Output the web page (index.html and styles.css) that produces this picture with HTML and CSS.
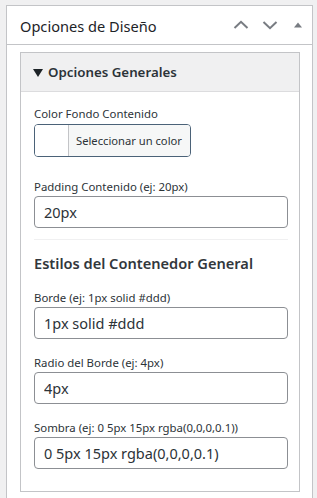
FILE: index.html
```html
<!DOCTYPE html>
<html lang="es">
<head>
<meta charset="utf-8">
<title>Opciones de Diseño</title>
<link rel="stylesheet" href="styles.css">
</head>
<body>
<div class="postbox">
  <div class="postbox-header">
    <h2 class="postbox-title">Opciones de Diseño</h2>
    <div class="handle-actions">
      <button class="handle-btn" aria-label="Mover arriba">
        <svg width="16" height="16" viewBox="0 0 16 16"><path d="M1.5 11 L8 4.8 L14.5 11" fill="none" stroke="#787c82" stroke-width="2"/></svg>
      </button>
      <button class="handle-btn" aria-label="Mover abajo">
        <svg width="16" height="16" viewBox="0 0 16 16"><path d="M1.5 5 L8 11.2 L14.5 5" fill="none" stroke="#787c82" stroke-width="2"/></svg>
      </button>
      <button class="handle-btn toggle" aria-label="Alternar panel">
        <svg width="10" height="8" viewBox="0 0 10 8"><path d="M1 6.5 L5 1.5 L9 6.5 Z" fill="#787c82"/></svg>
      </button>
    </div>
  </div>
  <div class="inside">
    <details class="group" open>
      <summary class="group-summary">Opciones Generales</summary>
      <div class="group-body">
        <div class="field field-color">
          <label class="field-label">Color Fondo Contenido</label>
          <button class="color-result">
            <span class="color-swatch"></span>
            <span class="color-text">Seleccionar un color</span>
          </button>
        </div>
        <div class="field before-divider">
          <label class="field-label" for="pad">Padding Contenido (ej: 20px)</label>
          <input class="text-input" id="pad" type="text" value="20px">
        </div>
        <hr class="divider">
        <h3 class="section-title">Estilos del Contenedor General</h3>
        <div class="field">
          <label class="field-label" for="borde">Borde (ej: 1px solid #ddd)</label>
          <input class="text-input" id="borde" type="text" value="1px solid #ddd">
        </div>
        <div class="field">
          <label class="field-label" for="radio">Radio del Borde (ej: 4px)</label>
          <input class="text-input" id="radio" type="text" value="4px">
        </div>
        <div class="field last">
          <label class="field-label" for="sombra">Sombra (ej: 0 5px 15px rgba(0,0,0,0.1))</label>
          <input class="text-input" id="sombra" type="text" value="0 5px 15px rgba(0,0,0,0.1)">
        </div>
      </div>
    </details>
  </div>
</div>
</body>
</html>
```

FILE: styles.css
```css
* { box-sizing: border-box; }
html, body { margin: 0; }
body {
  background: #f0f0f1;
  padding: 5px 4px 0 6px;
  font-family: "Noto Sans", "Open Sans", sans-serif;
  color: #2c3338;
}
.postbox {
  background: #fff;
  border: 1px solid #c3c4c7;
  border-bottom: none;
  min-height: 493px;
}
.postbox-header {
  display: flex;
  align-items: center;
  justify-content: space-between;
  height: 39px;
  border-bottom: 1px solid #c3c4c7;
  padding-left: 13px;
}
.postbox-title {
  margin: 2px 0 0;
  font-size: 14.6px;
  font-weight: 400;
  color: #1d2327;
  line-height: 1.4;
}
.handle-actions {
  display: flex;
  align-items: center;
  height: 100%;
}
.handle-btn {
  background: none;
  border: 0;
  padding: 0;
  width: 29px;
  height: 36px;
  display: flex;
  align-items: center;
  justify-content: center;
}
.handle-btn.toggle { width: 28px; }
.inside {
  padding: 7px 12px 0 13px;
}
.group {
  border: 1px solid #c3c4c7;
  background: #fff;
}
.group-summary {
  list-style: none;
  background: #f0f0f1;
  height: 39px;
  border-bottom: 1px solid #dcdcde;
  padding-left: 12px;
  display: flex;
  align-items: center;
  font-size: 13.3px;
  font-weight: 600;
  color: #2c3338;
  cursor: pointer;
}
.group-summary::-webkit-details-marker { display: none; }
.group-summary::before {
  content: "";
  width: 0;
  height: 0;
  border-left: 5px solid transparent;
  border-right: 5px solid transparent;
  border-top: 8px solid #1d2327;
  margin-right: 5px;
  margin-top: 1px;
}
.group-body {
  padding: 13px 11px 22px 13px;
}
.field { margin-bottom: 15px; }
.field.last { margin-bottom: 0; }
.field.before-divider { margin-bottom: 11px; }
.field-color { margin-bottom: 21px; }
.field-label {
  display: block;
  font-size: 11.4px;
  line-height: 18px;
  color: #2c3338;
}
.color-result {
  display: flex;
  width: 157px;
  height: 33px;
  padding: 0;
  margin-top: 1px;
  border: 1px solid #4b6278;
  border-radius: 4px;
  background: #fff;
  overflow: hidden;
  font-family: inherit;
}
.color-swatch {
  width: 33px;
  flex: none;
  background: #fff;
}
.color-text {
  flex: 1;
  display: flex;
  align-items: center;
  background: #f6f7f7;
  border-left: 1px solid #c3c4c7;
  padding: 0 0 0 7px;
  font-size: 11.2px;
  color: #2c3338;
  white-space: nowrap;
}
.text-input {
  display: block;
  width: 100%;
  height: 32px;
  border: 1px solid #8c8f94;
  border-radius: 4px;
  padding: 0 9px;
  font-family: inherit;
  font-size: 14.5px;
  color: #2c3338;
  background: #fff;
}
.divider {
  border: 0;
  border-top: 1px solid #f0f0f1;
  margin: 0;
}
.section-title {
  margin: 13px 0 15px;
  font-size: 14.6px;
  font-weight: 600;
  line-height: 21px;
  color: #32373c;
}
```
